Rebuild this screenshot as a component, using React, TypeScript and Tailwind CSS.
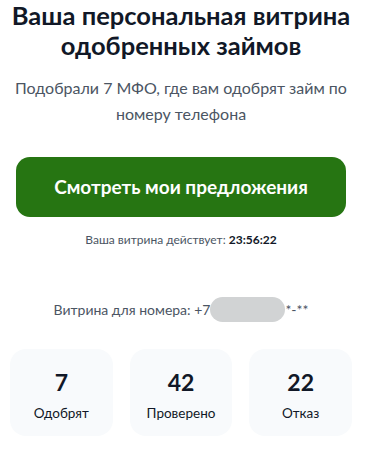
export default function App() {
  const stats = [
    { value: "7", label: "Одобрят" },
    { value: "42", label: "Проверено" },
    { value: "22", label: "Отказ" },
  ];

  return (
    <div className="w-[362px] bg-white font-['Lato',sans-serif] text-center">
      <h1 className="text-[25.5px] leading-[30px] font-bold text-[#111827]">
        Ваша персональная витрина
        <br />
        одобренных займов
      </h1>

      <p className="mt-[15px] text-[16px] leading-[26px] text-[#4b5563]">
        Подобрали 7 МФО, где вам одобрят займ по
        <br />
        номеру телефона
      </p>

      <div className="px-4 mt-[30px]">
        <button className="w-full h-[60px] rounded-[14px] bg-[#267512] text-white text-[19px] font-bold">
          Смотреть мои предложения
        </button>
      </div>

      <p className="mt-[15px] text-[12px] leading-4 text-[#4b5563]">
        Ваша витрина действует: <span className="font-bold text-[#111827]">23:56:22</span>
      </p>

      <div className="mt-[49px] flex items-center justify-center text-[14px] leading-[25px] text-[#4b5563]">
        <span>Витрина для номера: +7</span>
        <span className="w-[75px] h-[25px] rounded-full bg-[#d1d3d4]" />
        <span>*-**</span>
      </div>

      <div className="mt-[27px] px-[10px] grid grid-cols-3 gap-[17px]">
        {stats.map((s) => (
          <div
            key={s.label}
            className="h-[87px] pt-[4px] rounded-[16px] bg-[#f8fafc] flex flex-col items-center justify-center"
          >
            <div className="text-[23px] leading-[30px] font-bold text-[#111827]">{s.value}</div>
            <div className="mt-[6px] text-[13.5px] leading-5 text-[#111827]">{s.label}</div>
          </div>
        ))}
      </div>
    </div>
  );
}
